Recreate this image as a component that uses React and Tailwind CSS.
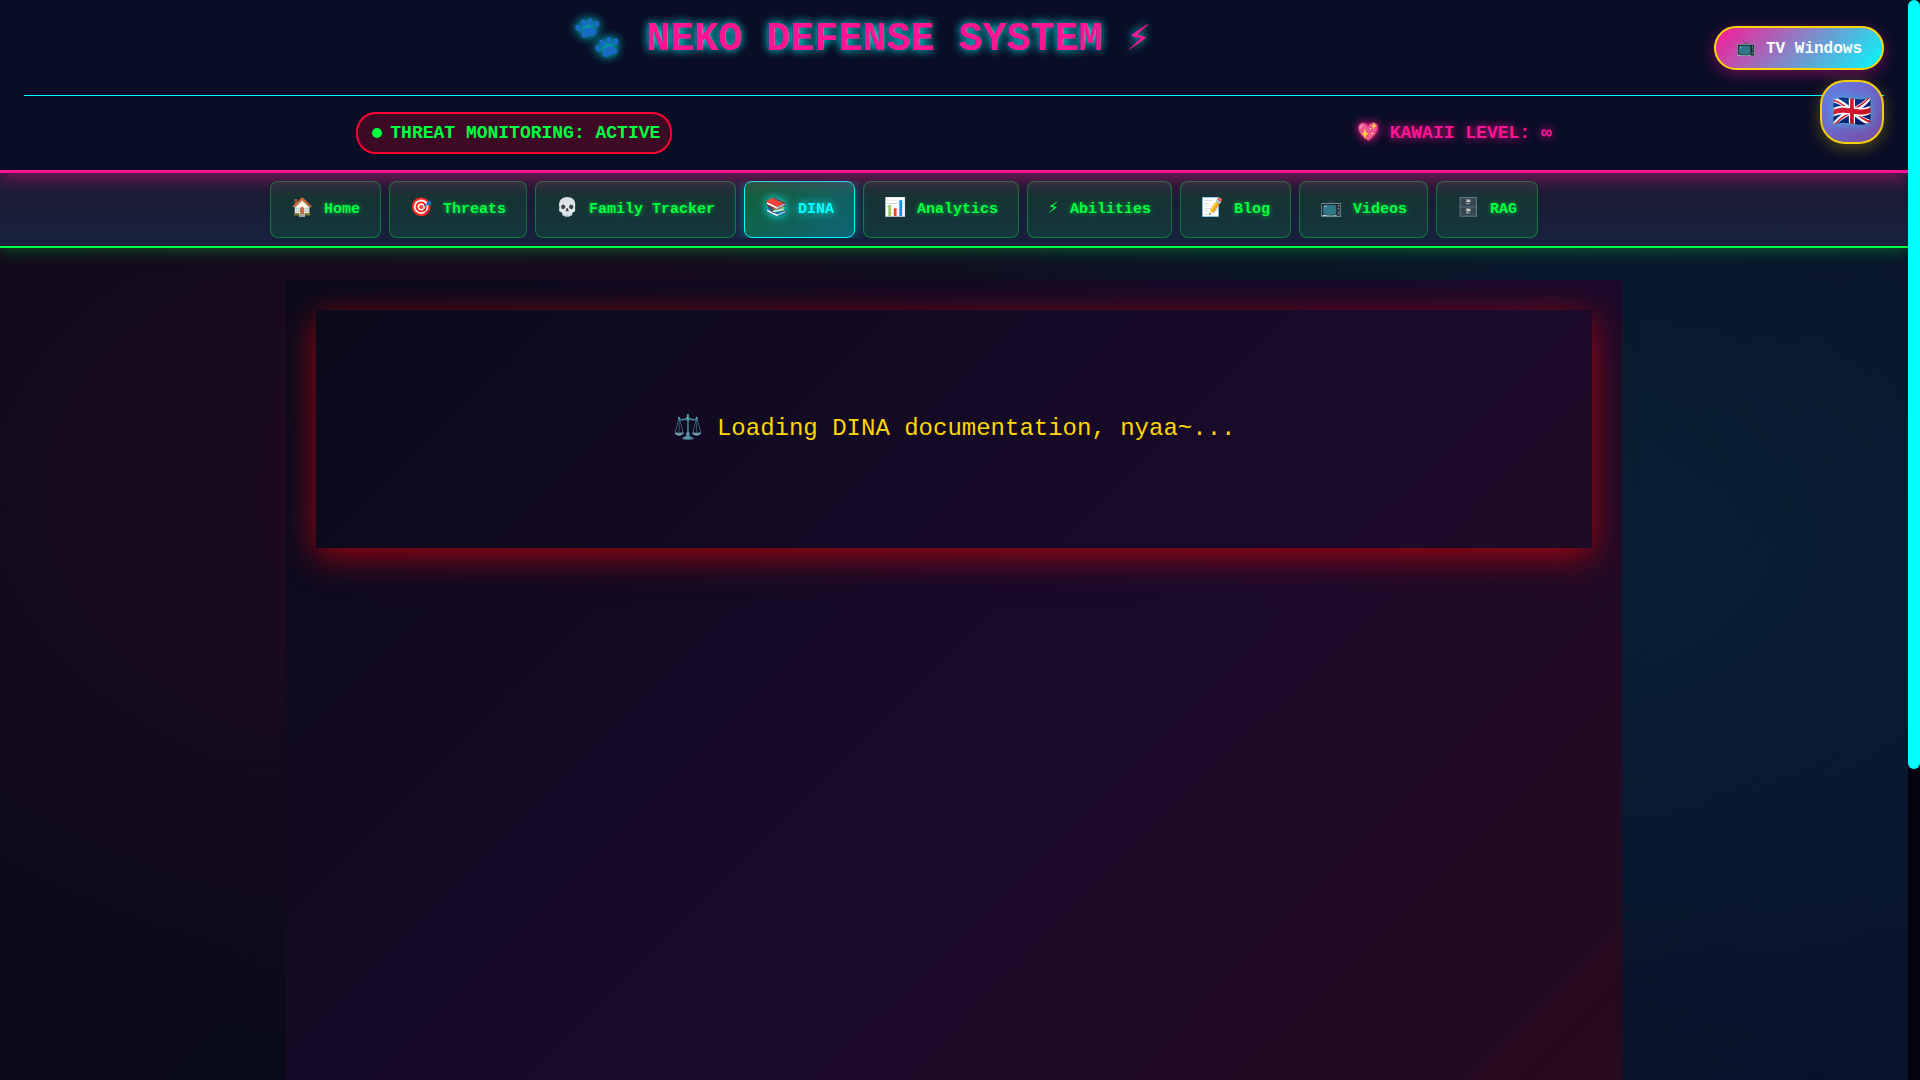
const navItems = [
  { icon: '🏠', label: 'Home' },
  { icon: '🎯', label: 'Threats' },
  { icon: '💀', label: 'Family Tracker' },
  { icon: '📚', label: 'DINA', active: true },
  { icon: '📊', label: 'Analytics' },
  { icon: '⚡', label: 'Abilities' },
  { icon: '📝', label: 'Blog' },
  { icon: '📺', label: 'Videos' },
  { icon: '🗄️', label: 'RAG' },
];

function Header() {
  return (
    <header className="relative z-10 border-b-3 border-[#ff1493] bg-[#090d26] px-6 pb-4 shadow-[0_4px_20px_rgba(255,20,147,0.5)]">
      <div className="flex items-start gap-4 border-b border-[#00ffff] pb-[25px]">
        <h1 className="flex-1 pt-4 text-center text-[40px] leading-[48px] font-bold text-[#ff1493] [text-shadow:0_0_10px_#00ffff]">
          🐾 NEKO DEFENSE SYSTEM ⚡
        </h1>
        <button
          type="button"
          className="mt-[26px] flex h-11 items-center rounded-[22px] border-2 border-[#ffd700] bg-[linear-gradient(135deg,#ff1493,#00ffff)] bg-origin-border px-5 pt-0.5 text-base font-bold whitespace-pre text-white shadow-[0_4px_15px_rgba(255,20,147,0.4)]"
        >
          📺 TV Windows
        </button>
      </div>
      <div className="flex items-center justify-around gap-5 pt-4 text-[18px] font-bold">
        <div className="flex h-[42px] items-center gap-2 rounded-[20px] border-2 border-[#ff0033] bg-[#3d0a26] pr-[10px] pl-[14px] text-[#00ff41]">
          <span className="size-[10px] rounded-full bg-[#00ff41]" />
          THREAT MONITORING: ACTIVE
        </div>
        <div className="text-[#ff1493] [text-shadow:0_0_10px_#ff1493]">💖 KAWAII LEVEL: ∞</div>
      </div>
      <button
        type="button"
        aria-label="Language: English"
        className="absolute top-20 right-6 flex size-16 items-center justify-center rounded-[25px] border-2 border-[#f5cd0c] bg-[linear-gradient(135deg,#667eea,#764ba2)] pt-1 text-[32px] leading-none shadow-[0_4px_15px_rgba(255,215,0,0.3)] [text-shadow:0_0_10px_#00ffff88]"
      >
        🇬🇧
      </button>
    </header>
  );
}

function Nav() {
  return (
    <nav className="border-b-2 border-[#00ff41] bg-linear-to-b from-[#1a1a2e] to-[#16213e] shadow-[0_2px_15px_rgba(0,255,65,0.3)]">
      <div className="mx-auto max-w-[1400px] px-4 py-2">
        <ul className="flex gap-2 overflow-hidden">
          {navItems.map(({ icon, label, active }) => (
            <li key={label}>
              <a
                href="#"
                aria-current={active ? 'page' : undefined}
                className={
                  'flex h-[57px] items-baseline gap-[11px] rounded-lg border px-5 pt-[10px] text-[15px] leading-6 font-bold whitespace-nowrap ' +
                  (active
                    ? 'border-[#00ffff] bg-[linear-gradient(135deg,rgba(0,255,65,0.3),rgba(0,255,255,0.3))] text-[#00ffff] shadow-[0_0_15px_rgba(0,255,255,0.4)] [text-shadow:0_0_10px_#00ffff]'
                    : 'border-[#00ff41]/35 bg-[#00ff41]/10 text-[#00ff41]')
                }
              >
                <span className="text-[18px] leading-8">{icon}</span>
                <span className={active ? '' : '[text-shadow:0_0_5px_#00ff4199]'}>{label}</span>
              </a>
            </li>
          ))}
        </ul>
      </div>
    </nav>
  );
}

export default function App() {
  return (
    <div className="flex h-screen font-['Liberation_Mono','DejaVu_Sans_Mono',monospace]">
      <div className="min-w-0 flex-1 overflow-y-auto bg-[radial-gradient(ellipse_45%_52%_at_24%_46%,rgba(255,20,147,0.09),transparent),radial-gradient(ellipse_50%_60%_at_80%_48%,rgba(0,220,255,0.09),transparent),linear-gradient(135deg,#0a0a17,#0a0a18_40%,#08112a)] [scrollbar-width:none]">
        <Header />
        <Nav />
        <main className="mx-auto max-w-[1400px] p-8">
          <section className="min-h-screen bg-[linear-gradient(135deg,#0a0a1a,#1a0a2a_50%,#2a0a1a)] p-[30px]">
            <div className="flex h-[238px] items-center justify-center text-2xl text-[#ffd700] shadow-[0_8px_32px_rgba(255,0,0,0.6)]">
              <p>⚖️ Loading DINA documentation, nyaa~...</p>
            </div>
          </section>
        </main>
        <div className="h-[125px]" />
      </div>
      <div aria-hidden="true" className="w-3 bg-[#03030f]">
        <div className="h-[71.2%] rounded-md bg-[#00ffff]" />
      </div>
    </div>
  );
}
